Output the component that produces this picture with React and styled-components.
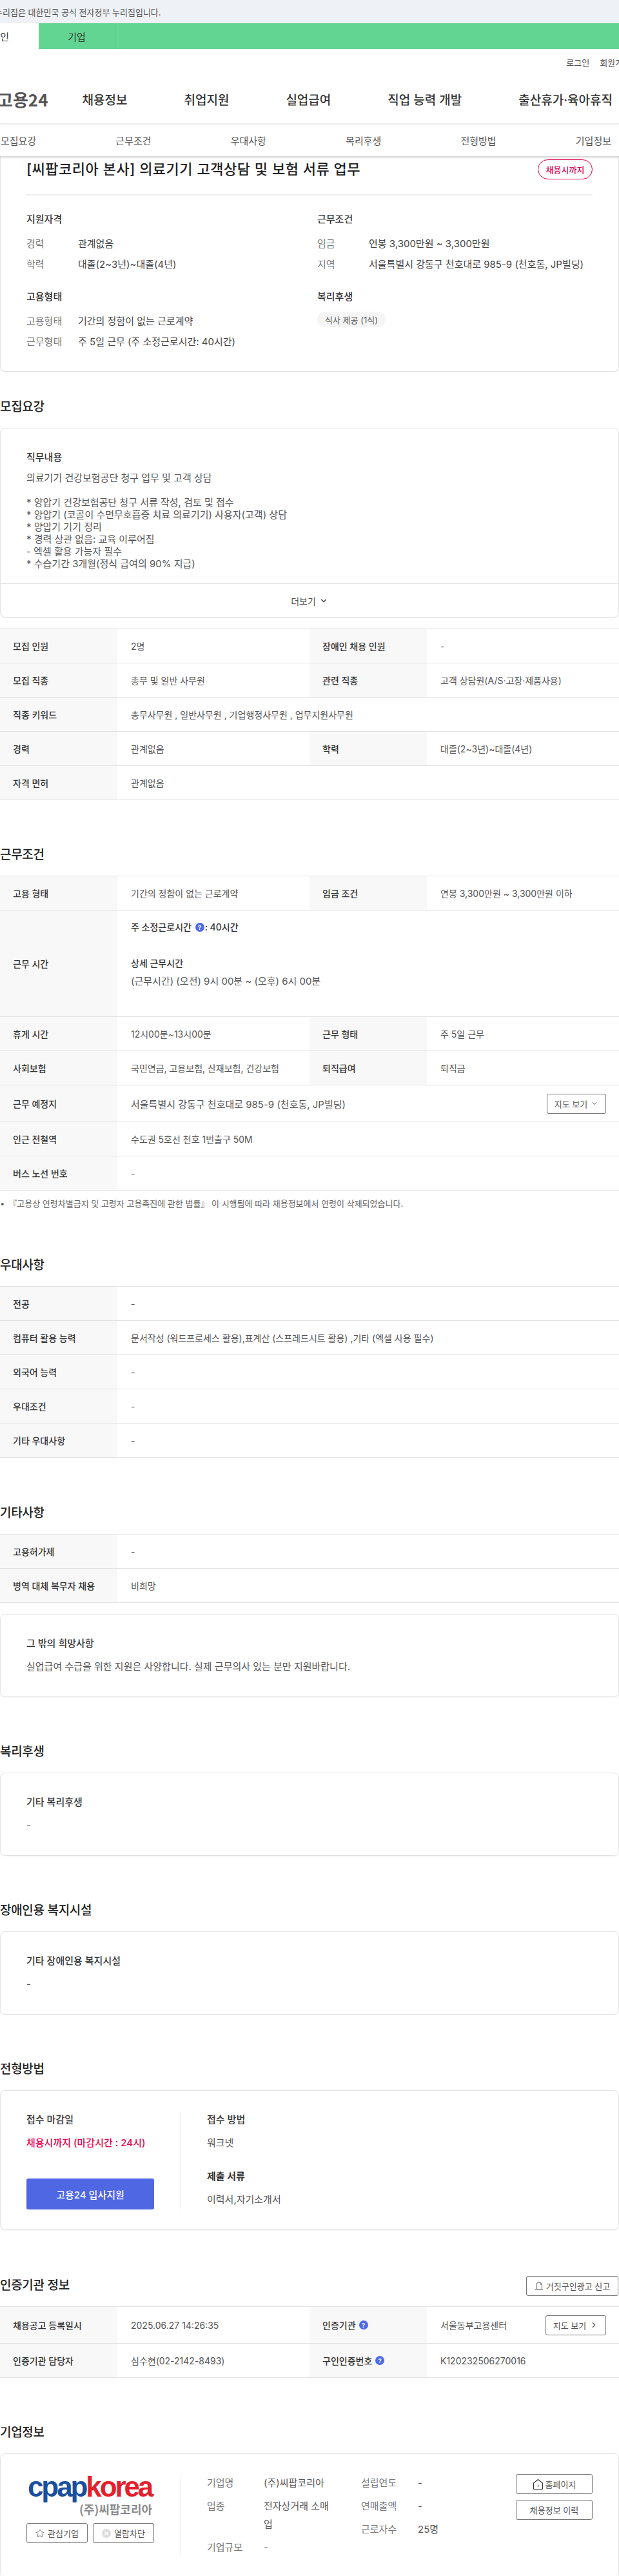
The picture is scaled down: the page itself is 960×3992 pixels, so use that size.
import React from 'react';
import styled, { createGlobalStyle } from 'styled-components';
import { ChevronDown, ChevronRight, Star } from 'lucide-react';

const GlobalStyle = createGlobalStyle`
  * {
    box-sizing: border-box;
  }
  body {
    margin: 0;
    background: #fff;
    font-family: Inter, "Noto Sans CJK KR", "Noto Sans", sans-serif;
    color: #333;
  }
`;

const Page = styled.div`
  width: 960px;
  height: 3992px;
  overflow: hidden;
  position: relative;
`;

const Notice = styled.div`
  height: 36px;
  display: flex;
  align-items: center;
  background: #eef1f5;
  font-size: 13px;
  color: #555;
  white-space: nowrap;
  span {
    margin-left: -8px;
  }
`;

const UserTabs = styled.div`
  height: 40px;
  display: flex;
  background: #62d592;
  font-size: 15px;
  color: #333;
`;

const UserTab = styled.div`
  display: flex;
  align-items: center;
  width: ${(props) => props.$width}px;
  white-space: nowrap;
  justify-content: ${(props) => (props.$active ? 'flex-end' : 'center')};
  padding-right: ${(props) => (props.$active ? '46px' : '0')};
  background: ${(props) => (props.$active ? '#fff' : 'transparent')};
  border-right: ${(props) => (props.$active ? 'none' : '1px solid #57c585')};
`;

const Util = styled.div`
  height: 40px;
  display: flex;
  justify-content: flex-end;
  align-items: center;
  gap: 16px;
  margin-right: -18px;
  font-size: 13px;
  color: #555;
`;

const MainNav = styled.nav`
  height: 77px;
  display: flex;
  align-items: center;
  gap: 88px;
  border-bottom: 2px solid #eee;
  white-space: nowrap;
  padding-bottom: 1px;
`;

const Brand = styled.div`
  font-family: "Noto Sans CJK KR", sans-serif;
  font-size: 26px;
  font-weight: 700;
  color: #555;
  margin-left: -4px;
  margin-right: -35px;
`;

const NavItem = styled.div`
  font-size: 19px;
  font-weight: 500;
  color: #333;
`;

const SubNav = styled.div`
  position: relative;
  z-index: 2;
  height: 49px;
  display: flex;
  justify-content: space-between;
  align-items: center;
  padding: 0 12px 0 1px;
  background: #fff;
  font-size: 15px;
  color: #555;
  box-shadow: 0 2px 3px rgba(0, 0, 0, 0.18);
`;

const Card = styled.div`
  background: #fff;
  border: 1px solid #e2e2e2;
  border-radius: 8px;
  box-shadow: 0 1px 1px rgba(0, 0, 0, 0.04);
`;

const SummaryCard = styled(Card)`
  border-top: none;
  border-top-left-radius: 0;
  border-top-right-radius: 0;
  height: 334px;
`;

const SummaryHead = styled.div`
  height: 61px;
  margin: 0 40px;
  padding-top: 5px;
  display: flex;
  justify-content: space-between;
  align-items: flex-start;
  border-bottom: 2px solid #eee;
`;

const JobTitle = styled.h1`
  margin: 0;
  font-size: 22px;
  line-height: 31px;
  font-weight: 500;
  letter-spacing: 0.5px;
  color: #222;
`;

const Deadline = styled.div`
  height: 31px;
  width: 85px;
  display: flex;
  align-items: center;
  justify-content: center;
  border: 1px solid #e6004f;
  border-radius: 16px;
  font-size: 13px;
  font-weight: 500;
  color: #e6004f;
`;

const SummaryGrid = styled.div`
  display: grid;
  grid-template-columns: 451px 1fr;
  row-gap: 24px;
  padding: 26px 40px 0;
`;

const GroupTitle = styled.div`
  font-size: 15px;
  line-height: 22px;
  font-weight: 500;
  color: #333;
  margin-bottom: 9px;
`;

const SummaryRow = styled.div`
  display: flex;
  height: 32.5px;
  align-items: center;
  font-size: 15px;
`;

const SummaryLabel = styled.span`
  width: 80px;
  color: #777;
`;

const SummaryValue = styled.span`
  color: #444;
`;

const Chip = styled.span`
  display: inline-flex;
  align-items: center;
  height: 24px;
  padding: 0 12px;
  margin-top: 3px;
  border-radius: 12px;
  background: #f5f5f5;
  font-size: 13px;
  color: #555;
`;

const Section = styled.section`
  margin-top: ${(props) => props.$top ?? 71}px;
`;

const SectionHead = styled.div`
  height: 28px;
  margin-bottom: 18px;
  display: flex;
  justify-content: space-between;
  align-items: center;
`;

const SectionTitle = styled.h2`
  margin: 0;
  font-size: 19px;
  line-height: 28px;
  font-weight: 500;
  letter-spacing: -0.3px;
  color: #222;
`;

const JobCard = styled(Card)`
  padding-top: 34px;
`;

const JobBody = styled.div`
  padding: 0 40px;
  height: 206px;
`;

const CardTitle = styled.div`
  font-size: 15px;
  line-height: 22px;
  font-weight: ${(props) => (props.$strong ? 700 : 500)};
  color: #333;
`;

const Lines = styled.div`
  margin-top: 11px;
  font-size: 15px;
  line-height: 19px;
  color: #555;
  white-space: pre-wrap;
`;

const MoreRow = styled.div`
  height: 52px;
  display: flex;
  align-items: center;
  justify-content: center;
  gap: 5px;
  border-top: 1px solid #e2e2e2;
  font-size: 14px;
  color: #555;
`;

const InfoTable = styled.div`
  border-top: 1px solid #e2e2e2;
  margin-top: ${(props) => props.$top ?? 0}px;
`;

const Row = styled.div`
  display: grid;
  grid-template-columns: ${(props) => (props.$single ? '182px 1fr' : '182px 298px 182px 1fr')};
  min-height: ${(props) => props.$height ?? 53}px;
  border-bottom: 1px solid #e2e2e2;
  font-size: 14px;
`;

const Label = styled.div`
  display: flex;
  align-items: center;
  gap: 5px;
  padding-left: 20px;
  background: #f8f8f8;
  font-weight: 500;
  color: #333;
`;

const Value = styled.div`
  display: flex;
  align-items: center;
  justify-content: space-between;
  padding: 0 20px 0 21px;
  font-size: ${(props) => (props.$large ? 15 : 14)}px;
  color: #555;
`;

const StackValue = styled.div`
  padding: 12px 21px;
  line-height: 28px;
  color: #555;
`;

const Strong = styled.div`
  display: flex;
  align-items: center;
  white-space: pre;
  font-weight: 500;
  color: #333;
  min-height: 28px;
  margin-bottom: ${(props) => props.$gap ?? 0}px;
`;

const HoursText = styled.div`
  font-size: 15px;
`;

const Help = styled.span`
  display: inline-flex;
  align-items: center;
  justify-content: center;
  width: 14px;
  height: 14px;
  margin: ${(props) => (props.$inline ? '0 1px 0 2px' : '0')};
  border-radius: 50%;
  background: #4f6be6;
  font-size: 9px;
  font-weight: 700;
  line-height: 1;
  color: #fff;
`;

const Outline = styled.button`
  display: inline-flex;
  align-items: center;
  justify-content: center;
  gap: ${(props) => props.$gap ?? 5}px;
  flex-shrink: 0;
  height: 31px;
  width: ${(props) => props.$width}px;
  margin-right: ${(props) => props.$right ?? 0}px;
  padding: 0;
  border: 1px solid #777;
  border-radius: 3px;
  background: #fff;
  font-family: inherit;
  font-size: 13px;
  color: #555;
`;

const Note = styled.div`
  display: flex;
  gap: 6px;
  margin-top: 10px;
  font-size: 13px;
  line-height: 20px;
  color: #666;
`;

const TextCard = styled(Card)`
  height: 129px;
  padding: 34px 40px 0;
  margin-top: ${(props) => props.$top ?? 0}px;
`;

const CardText = styled.div`
  margin-top: 14px;
  font-size: 15px;
  line-height: 22px;
  color: #555;
`;

const ApplyCard = styled(Card)`
  height: 217px;
  padding: 32px 40px 0;
  display: grid;
  grid-template-columns: 240px 1fr;
  align-items: start;
`;

const ApplyLeft = styled.div`
  height: 152px;
  padding-top: 2px;
  border-right: 1px solid #eee;
`;

const ApplyRight = styled.div`
  padding: 2px 0 0 40px;
`;

const Red = styled.div`
  margin-top: 14px;
  font-size: 15px;
  line-height: 22px;
  font-weight: 500;
  color: #e6004f;
`;

const ApplyButton = styled.button`
  display: block;
  width: 198px;
  height: 48px;
  margin-top: 44px;
  border: none;
  border-radius: 3px;
  background: #4f67e3;
  font-family: inherit;
  font-size: 15px;
  font-weight: 500;
  color: #fff;
`;

const ApplyBlock = styled.div`
  margin-bottom: 30px;
`;

const CompanyCard = styled(Card)`
  height: 193px;
  padding: 31px 40px 0;
  display: grid;
  grid-template-columns: 240px 1fr 119px;
  align-items: start;
`;

const CompanyLeft = styled.div`
  height: 128px;
  border-right: 1px solid #eee;
`;

const Logo = styled.div`
  display: flex;
  width: 196px;
  padding-left: 2px;
  font-family: "Liberation Sans", Arial, sans-serif;
  font-size: 44px;
  line-height: 40px;
  font-weight: 700;
  letter-spacing: -3.1px;
`;

const LogoBlue = styled.span`
  color: #1a4fa0;
`;

const LogoRed = styled.span`
  color: #e4202c;
`;

const LogoName = styled.div`
  width: 195px;
  text-align: right;
  font-family: "Noto Sans CJK KR", sans-serif;
  font-size: 18px;
  line-height: 28px;
  font-weight: 700;
  color: #8c8c8c;
`;

const CompanyButtons = styled.div`
  display: flex;
  gap: 8px;
  margin-top: 8px;
`;

const CompanyInfo = styled.div`
  display: grid;
  grid-template-columns: 239px 1fr;
  padding-left: 40px;
  font-size: 15px;
`;

const InfoColumn = styled.div`
  display: flex;
  flex-direction: column;
  gap: 8px;
`;

const InfoRow = styled.div`
  display: flex;
  line-height: 28px;
`;

const InfoLabel = styled.span`
  flex: 0 0 88px;
  color: #777;
`;

const InfoValue = styled.span`
  width: 105px;
  word-break: break-all;
  color: #555;
`;

const CompanyActions = styled.div`
  display: flex;
  flex-direction: column;
  gap: 9px;
`;

const AlertIcon = () => (
  <svg width="14" height="14" viewBox="0 0 14 14" fill="none" stroke="#444" strokeWidth="1">
    <path d="M1 12.5h12M2.5 12.5V6.5a4.5 4.5 0 0 1 9 0v6" />
    <path d="M9.2 4.2l.8 1.6" />
  </svg>
);

const HomeIcon = () => (
  <svg width="17" height="18" viewBox="0 0 17 18" fill="none" stroke="#333" strokeWidth="1.1">
    <path d="M1.5 7L8.5 1.5 15.5 7v8.5a1.2 1.2 0 0 1-1.2 1.2H2.7a1.2 1.2 0 0 1-1.2-1.2z" />
    <path d="M8.5 9.5v3.5" />
  </svg>
);

const BlockIcon = () => (
  <svg width="14" height="14" viewBox="0 0 14 14" fill="none">
    <circle cx="7" cy="7" r="7" fill="#ddd" />
    <path d="M4.5 4.5l5 5M9.5 4.5l-5 5" stroke="#fff" strokeWidth="1.4" />
  </svg>
);

const requirementRows = [
  ['모집 인원', '2명', '장애인 채용 인원', '-'],
  ['모집 직종', '총무 및 일반 사무원', '관련 직종', '고객 상담원(A/S·고장·제품사용)'],
  ['직종 키워드', '총무사무원 , 일반사무원 , 기업행정사무원 , 업무지원사무원'],
  ['경력', '관계없음', '학력', '대졸(2~3년)~대졸(4년)'],
  ['자격 면허', '관계없음'],
];

const preferRows = [
  ['전공', '-'],
  ['컴퓨터 활용 능력', '문서작성 (워드프로세스 활용),표계산 (스프레드시트 활용)  ,기타 (엑셀 사용 필수)'],
  ['외국어 능력', '-'],
  ['우대조건', '-'],
  ['기타 우대사항', '-'],
];

const etcRows = [
  ['고용허가제', '-'],
  ['병역 대체 복무자 채용', '비희망'],
];

const jobText = `의료기기 건강보험공단 청구 업무 및 고객 상담

* 양압기 건강보험공단 청구 서류 작성, 검토 및 접수
* 양압기 (코골이 수면무호흡증 치료 의료기기) 사용자(고객) 상담
* 양압기 기기 정리
* 경력 상관 없음: 교육 이루어짐
- 엑셀 활용 가능자 필수
* 수습기간 3개월(정식 급여의 90% 지급)`;

const TableRow = ({ cells, height }) => (
  <Row $single={cells.length === 2} $height={height}>
    <Label>{cells[0]}</Label>
    <Value>{cells[1]}</Value>
    {cells.length > 2 && <Label>{cells[2]}</Label>}
    {cells.length > 2 && <Value>{cells[3]}</Value>}
  </Row>
);

export default function App() {
  return (
    <Page>
      <GlobalStyle />
      <Notice>
        <span>누리집은 대한민국 공식 전자정부 누리집입니다.</span>
      </Notice>
      <UserTabs>
        <UserTab $active $width={60}>개인</UserTab>
        <UserTab $width={119}>기업</UserTab>
      </UserTabs>
      <Util>
        <span>로그인</span>
        <span>회원가입</span>
      </Util>
      <MainNav>
        <Brand>고용24</Brand>
        <NavItem>채용정보</NavItem>
        <NavItem>취업지원</NavItem>
        <NavItem>실업급여</NavItem>
        <NavItem>직업 능력 개발</NavItem>
        <NavItem>출산휴가·육아휴직</NavItem>
      </MainNav>
      <SubNav>
        <span>모집요강</span>
        <span>근무조건</span>
        <span>우대사항</span>
        <span>복리후생</span>
        <span>전형방법</span>
        <span>기업정보</span>
      </SubNav>

      <SummaryCard>
        <SummaryHead>
          <JobTitle>[씨팝코리아 본사] 의료기기 고객상담 및 보험 서류 업무</JobTitle>
          <Deadline>채용시까지</Deadline>
        </SummaryHead>
        <SummaryGrid>
          <div>
            <GroupTitle>지원자격</GroupTitle>
            <SummaryRow><SummaryLabel>경력</SummaryLabel><SummaryValue>관계없음</SummaryValue></SummaryRow>
            <SummaryRow><SummaryLabel>학력</SummaryLabel><SummaryValue>대졸(2~3년)~대졸(4년)</SummaryValue></SummaryRow>
          </div>
          <div>
            <GroupTitle>근무조건</GroupTitle>
            <SummaryRow><SummaryLabel>임금</SummaryLabel><SummaryValue>연봉 3,300만원 ~ 3,300만원</SummaryValue></SummaryRow>
            <SummaryRow><SummaryLabel>지역</SummaryLabel><SummaryValue>서울특별시 강동구 천호대로 985-9 (천호동, JP빌딩)</SummaryValue></SummaryRow>
          </div>
          <div>
            <GroupTitle>고용형태</GroupTitle>
            <SummaryRow><SummaryLabel>고용형태</SummaryLabel><SummaryValue>기간의 정함이 없는 근로계약</SummaryValue></SummaryRow>
            <SummaryRow><SummaryLabel>근무형태</SummaryLabel><SummaryValue>주 5일 근무 (주 소정근로시간: 40시간)</SummaryValue></SummaryRow>
          </div>
          <div>
            <GroupTitle>복리후생</GroupTitle>
            <Chip>식사 제공 (1식)</Chip>
          </div>
        </SummaryGrid>
      </SummaryCard>

      <Section $top={41}>
        <SectionHead><SectionTitle>모집요강</SectionTitle></SectionHead>
        <JobCard>
          <JobBody>
            <CardTitle>직무내용</CardTitle>
            <Lines>{jobText}</Lines>
          </JobBody>
          <MoreRow>
            더보기 <ChevronDown size={14} strokeWidth={2} color="#333" />
          </MoreRow>
        </JobCard>
        <InfoTable $top={17}>
          {requirementRows.map((cells) => (
            <TableRow key={cells[0]} cells={cells} />
          ))}
        </InfoTable>
      </Section>

      <Section>
        <SectionHead><SectionTitle>근무조건</SectionTitle></SectionHead>
        <InfoTable>
          <TableRow cells={['고용 형태', '기간의 정함이 없는 근로계약', '임금 조건', '연봉 3,300만원 ~ 3,300만원 이하']} />
          <Row $single $height={165}>
            <Label>근무 시간</Label>
            <StackValue>
              <Strong $gap={28}>주 소정근로시간 <Help $inline>?</Help>: 40시간</Strong>
              <Strong>상세 근무시간</Strong>
              <HoursText>(근무시간) (오전) 9시 00분 ~ (오후) 6시 00분</HoursText>
            </StackValue>
          </Row>
          <TableRow cells={['휴게 시간', '12시00분~13시00분', '근무 형태', '주 5일 근무']} />
          <TableRow cells={['사회보험', '국민연금, 고용보험, 산재보험, 건강보험', '퇴직급여', '퇴직금']} />
          <Row $single $height={57}>
            <Label>근무 예정지</Label>
            <Value $large>
              서울특별시 강동구 천호대로 985-9 (천호동, JP빌딩)
              <Outline $width={92}>지도 보기 <ChevronDown size={12} /></Outline>
            </Value>
          </Row>
          <TableRow cells={['인근 전철역', '수도권 5호선 천호 1번출구 50M']} />
          <TableRow cells={['버스 노선 번호', '-']} />
        </InfoTable>
        <Note>
          <span>•</span>
          <span>『고용상 연령차별금지 및 고령자 고용촉진에 관한 법률』 이 시행됨에 따라 채용정보에서 연령이 삭제되었습니다.</span>
        </Note>
      </Section>

      <Section $top={72}>
        <SectionHead><SectionTitle>우대사항</SectionTitle></SectionHead>
        <InfoTable>
          {preferRows.map((cells) => (
            <TableRow key={cells[0]} cells={cells} />
          ))}
        </InfoTable>
      </Section>

      <Section $top={72}>
        <SectionHead><SectionTitle>기타사항</SectionTitle></SectionHead>
        <InfoTable>
          {etcRows.map((cells) => (
            <TableRow key={cells[0]} cells={cells} />
          ))}
        </InfoTable>
        <TextCard $top={17}>
          <CardTitle>그 밖의 희망사항</CardTitle>
          <CardText>실업급여 수급을 위한 지원은 사양합니다. 실제 근무의사 있는 분만 지원바랍니다.</CardText>
        </TextCard>
      </Section>

      <Section>
        <SectionHead><SectionTitle>복리후생</SectionTitle></SectionHead>
        <TextCard>
          <CardTitle>기타 복리후생</CardTitle>
          <CardText>-</CardText>
        </TextCard>
      </Section>

      <Section>
        <SectionHead><SectionTitle>장애인용 복지시설</SectionTitle></SectionHead>
        <TextCard>
          <CardTitle>기타 장애인용 복지시설</CardTitle>
          <CardText>-</CardText>
        </TextCard>
      </Section>

      <Section>
        <SectionHead><SectionTitle>전형방법</SectionTitle></SectionHead>
        <ApplyCard>
          <ApplyLeft>
            <CardTitle>접수 마감일</CardTitle>
            <Red>채용시까지 (마감시간 : 24시)</Red>
            <ApplyButton>고용24 입사지원</ApplyButton>
          </ApplyLeft>
          <ApplyRight>
            <ApplyBlock>
              <CardTitle>접수 방법</CardTitle>
              <CardText>워크넷</CardText>
            </ApplyBlock>
            <ApplyBlock>
              <CardTitle $strong>제출 서류</CardTitle>
              <CardText>이력서,자기소개서</CardText>
            </ApplyBlock>
          </ApplyRight>
        </ApplyCard>
      </Section>

      <Section $top={72}>
        <SectionHead>
          <SectionTitle>인증기관 정보</SectionTitle>
          <Outline $width={143} $right={1} $gap={4}><AlertIcon />거짓구인광고 신고</Outline>
        </SectionHead>
        <InfoTable>
          <Row $height={57}>
            <Label>채용공고 등록일시</Label>
            <Value>2025.06.27 14:26:35</Value>
            <Label>인증기관 <Help>?</Help></Label>
            <Value>
              서울동부고용센터
              <Outline $width={94}>지도 보기 <ChevronRight size={14} strokeWidth={2} /></Outline>
            </Value>
          </Row>
          <Row>
            <Label>인증기관 담당자</Label>
            <Value>심수현(02-2142-8493)</Value>
            <Label>구인인증번호 <Help>?</Help></Label>
            <Value>K120232506270016</Value>
          </Row>
        </InfoTable>
      </Section>

      <Section>
        <SectionHead><SectionTitle>기업정보</SectionTitle></SectionHead>
        <CompanyCard>
          <CompanyLeft>
            <Logo>
              <LogoBlue>cpap</LogoBlue>
              <LogoRed>korea</LogoRed>
            </Logo>
            <LogoName>(주)씨팝코리아</LogoName>
            <CompanyButtons>
              <Outline $width={95}><Star size={14} strokeWidth={1.2} color="#444" />관심기업</Outline>
              <Outline $width={95}><BlockIcon />열람차단</Outline>
            </CompanyButtons>
          </CompanyLeft>
          <CompanyInfo>
            <InfoColumn>
              <InfoRow><InfoLabel>기업명</InfoLabel><InfoValue>(주)씨팝코리아</InfoValue></InfoRow>
              <InfoRow><InfoLabel>업종</InfoLabel><InfoValue>전자상거래 소매업</InfoValue></InfoRow>
              <InfoRow><InfoLabel>기업규모</InfoLabel><InfoValue>-</InfoValue></InfoRow>
            </InfoColumn>
            <InfoColumn>
              <InfoRow><InfoLabel>설립연도</InfoLabel><InfoValue>-</InfoValue></InfoRow>
              <InfoRow><InfoLabel>연매출액</InfoLabel><InfoValue>-</InfoValue></InfoRow>
              <InfoRow><InfoLabel>근로자수</InfoLabel><InfoValue>25명</InfoValue></InfoRow>
            </InfoColumn>
          </CompanyInfo>
          <CompanyActions>
            <Outline $width={119} $gap={3}><HomeIcon />홈페이지</Outline>
            <Outline $width={119}>채용정보 이력</Outline>
          </CompanyActions>
        </CompanyCard>
      </Section>
    </Page>
  );
}
